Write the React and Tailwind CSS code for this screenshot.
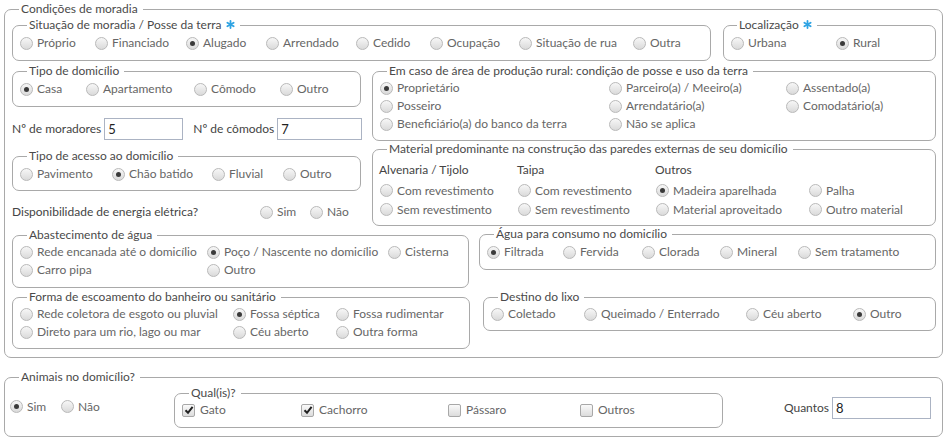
import React from "react";

const Star = () => (
  <svg className="inline-block ml-[4px] -mt-[2px]" width="9" height="9" viewBox="0 0 10 10">
    <g stroke="#2ea3e3" strokeWidth="2" strokeLinecap="round">
      <line x1="5" y1="1" x2="5" y2="9" />
      <line x1="1.5" y1="3" x2="8.5" y2="7" />
      <line x1="1.5" y1="7" x2="8.5" y2="3" />
    </g>
  </svg>
);

const Radio = ({ label, checked, className = "" }) => (
  <label className={`flex items-center gap-[4px] h-[18px] ${className}`}>
    <span className="shrink-0 w-[13px] h-[13px] rounded-full border border-[#b9b9b9] bg-linear-to-b from-[#f7f7f7] to-[#dadada] flex items-center justify-center">
      {checked && <span className="w-[5px] h-[5px] rounded-full bg-[#3a3a3a]" />}
    </span>
    <span className="whitespace-nowrap">{label}</span>
  </label>
);

const Check = ({ label, checked, className = "" }) => (
  <label className={`flex items-center gap-[5px] h-[18px] ${className}`}>
    <span className="shrink-0 w-[13px] h-[13px] rounded-[2px] border border-[#a8a8a8] bg-linear-to-b from-[#fafafa] to-[#dcdcdc] flex items-center justify-center">
      {checked && (
        <svg width="10" height="10" viewBox="0 0 10 10">
          <path d="M1.5 5.2 L4 7.8 L8.6 1.8" fill="none" stroke="#222" strokeWidth="2" />
        </svg>
      )}
    </span>
    <span className="whitespace-nowrap">{label}</span>
  </label>
);

const Box = ({ legend, star, className = "", legendClass = "ml-[7px]", children }) => (
  <fieldset className={`border border-[#a9a9a9] rounded-[7px] pl-[7px] pr-[6px] ${className}`}>
    <legend className={`pl-[2px] pr-[5px] leading-[16px] text-[#4a4a4a] ${legendClass}`}>
      {legend}
      {star && <Star />}
    </legend>
    {children}
  </fieldset>
);

const Field = ({ label, value, className = "", inputClass = "" }) => (
  <div className={`flex items-center gap-[3px] ${className}`}>
    <span className="text-[#444] whitespace-nowrap">{label}</span>
    <input
      readOnly
      value={value}
      className={`h-[22px] border border-[#abb3c3] bg-white px-[3px] text-[13px] text-[#222] outline-none ${inputClass}`}
    />
  </div>
);

export default function App() {
  return (
    <div className="bg-white min-h-[442px] pt-[1px] pl-[4px] text-[12px] text-[#666] font-['Lato','Open_Sans',sans-serif]">
      {/* ---------- Condições de moradia ---------- */}
      <Box legend="Condições de moradia" className="w-[939px] pb-[8px]" legendClass="ml-[7px]">
        {/* row 1 */}
        <div className="flex justify-between">
          <Box legend="Situação de moradia / Posse da terra" star className="w-[699px] pt-[1px] pb-[8px]">
            <div className="grid grid-cols-[75px_91px_80px_90px_74px_89px_114px_auto]">
              <Radio label="Próprio" />
              <Radio label="Financiado" />
              <Radio label="Alugado" checked />
              <Radio label="Arrendado" />
              <Radio label="Cedido" />
              <Radio label="Ocupação" />
              <Radio label="Situação de rua" />
              <Radio label="Outra" />
            </div>
          </Box>
          <Box legend="Localização" star className="w-[213px] pt-[1px] pb-[8px]" legendClass="ml-[6px]">
            <div className="grid grid-cols-[105px_auto]">
              <Radio label="Urbana" />
              <Radio label="Rural" checked />
            </div>
          </Box>
        </div>

        {/* row 2 */}
        <div className="flex justify-between items-start mt-[2px]">
          <div className="w-[349px] flex flex-col">
            <Box legend="Tipo de domicílio" className="pt-[1px] pb-[8px]">
              <div className="grid grid-cols-[66px_108px_86px_auto]">
                <Radio label="Casa" checked />
                <Radio label="Apartamento" />
                <Radio label="Cômodo" />
                <Radio label="Outro" />
              </div>
            </Box>
            <div className="flex items-center mt-[11px]">
              <Field label="Nº de moradores" value="5" inputClass="w-[79px]" />
              <Field label="Nº de cômodos" value="7" className="ml-[10px]" inputClass="w-[85px]" />
            </div>
            <Box legend="Tipo de acesso ao domicílio" className="mt-[8px] pt-[1px] pb-[7px]">
              <div className="grid grid-cols-[92px_100px_71px_auto]">
                <Radio label="Pavimento" />
                <Radio label="Chão batido" checked />
                <Radio label="Fluvial" />
                <Radio label="Outro" />
              </div>
            </Box>
            <div className="flex items-center h-[18px] mt-[12px]">
              <span className="text-[#444] w-[248px]">Disponibilidade de energia elétrica?</span>
              <div className="grid grid-cols-[50px_auto]">
                <Radio label="Sim" />
                <Radio label="Não" />
              </div>
            </div>
          </div>

          <div className="w-[564px] flex flex-col">
            <Box legend="Em caso de área de produção rural: condição de posse e uso da terra" className="pb-[7px]">
              <div className="grid grid-cols-[229px_177px_auto]">
                <Radio label="Proprietário" checked />
                <Radio label="Parceiro(a) / Meeiro(a)" />
                <Radio label="Assentado(a)" />
                <Radio label="Posseiro" />
                <Radio label="Arrendatário(a)" />
                <Radio label="Comodatário(a)" />
                <Radio label="Beneficiário(a) do banco da terra" />
                <Radio label="Não se aplica" />
              </div>
            </Box>
            <Box legend="Material predominante na construção das paredes externas de seu domicílio" className="pt-[4px] pb-[6px]">
              <div className="grid grid-cols-[137px_138px_153px_auto] text-[#444] leading-[18px] mb-[2px]">
                <span className="-ml-[1px]">Alvenaria / Tijolo</span>
                <span>Taipa</span>
                <span className="col-span-2">Outros</span>
              </div>
              <div className="grid grid-cols-[138px_138px_153px_auto] [&>label]:h-[19px]">
                <Radio label="Com revestimento" />
                <Radio label="Com revestimento" />
                <Radio label="Madeira aparelhada" checked />
                <Radio label="Palha" />
                <Radio label="Sem revestimento" />
                <Radio label="Sem revestimento" />
                <Radio label="Material aproveitado" />
                <Radio label="Outro material" />
              </div>
            </Box>
          </div>
        </div>

        {/* row 3 */}
        <div className="flex justify-between items-start">
          <Box legend="Abastecimento de água" className="w-[457px] mt-[1px] pb-[8px]">
            <div className="grid grid-cols-[187px_181px_auto]">
              <Radio label="Rede encanada até o domicílio" />
              <Radio label="Poço / Nascente no domicílio" checked />
              <Radio label="Cisterna" />
              <Radio label="Carro pipa" />
              <Radio label="Outro" />
            </div>
          </Box>
          <Box legend="Água para consumo no domicílio" className="w-[457px] pt-[1px] pb-[8px]">
            <div className="grid grid-cols-[76px_79px_78px_78px_auto]">
              <Radio label="Filtrada" checked />
              <Radio label="Fervida" />
              <Radio label="Clorada" />
              <Radio label="Mineral" />
              <Radio label="Sem tratamento" />
            </div>
          </Box>
        </div>

        {/* row 4 */}
        <div className="flex justify-between items-start mt-[1px]">
          <Box legend="Forma de escoamento do banheiro ou sanitário" className="w-[458px] pb-[7px]">
            <div className="grid grid-cols-[213px_103px_auto]">
              <Radio label="Rede coletora de esgoto ou pluvial" />
              <Radio label="Fossa séptica" checked />
              <Radio label="Fossa rudimentar" />
              <Radio label="Direto para um rio, lago ou mar" />
              <Radio label="Céu aberto" />
              <Radio label="Outra forma" />
            </div>
          </Box>
          <Box legend="Destino do lixo" className="w-[453px] pb-[7px]">
            <div className="grid grid-cols-[93px_162px_107px_auto]">
              <Radio label="Coletado" />
              <Radio label="Queimado / Enterrado" />
              <Radio label="Céu aberto" />
              <Radio label="Outro" checked />
            </div>
          </Box>
        </div>
      </Box>

      {/* ---------- Animais ---------- */}
      <Box
        legend="Animais no domicílio?"
        className="w-[939px] mt-[11px] !pl-[5px] pb-[8px]"
        legendClass="ml-[9px]"
      >
        <div className="flex items-center">
          <div className="grid grid-cols-[51px_auto] w-[164px]">
            <Radio label="Sim" checked />
            <Radio label="Não" />
          </div>
          <Box legend="Qual(is)?" className="w-[549px] pb-[8px]">
            <div className="grid grid-cols-[119px_147px_132px_auto]">
              <Check label="Gato" checked />
              <Check label="Cachorro" checked />
              <Check label="Pássaro" />
              <Check label="Outros" />
            </div>
          </Box>
          <Field label="Quantos" value="8" className="ml-auto mr-[5px] mt-[3px]" inputClass="w-[99px] h-[21px]" />
        </div>
      </Box>
    </div>
  );
}
